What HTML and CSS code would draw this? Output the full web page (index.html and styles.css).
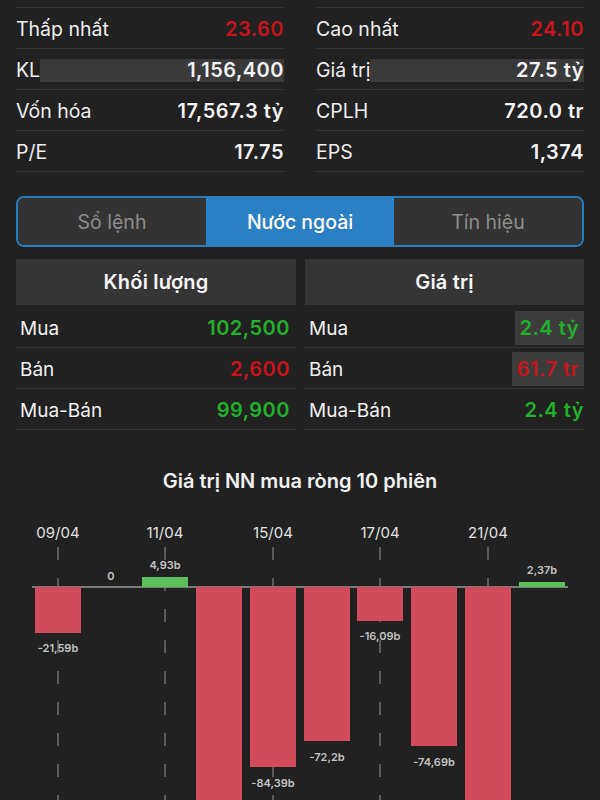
FILE: index.html
```html
<html>
<head>
	<title>Nước ngoài</title>
	<meta charset='UTF-8'>
	<link rel="stylesheet" href="styles.css">
</head>
<body>
	<div class='stats'>
		<div class='col'>
			<div class='row'><span class='lbl'>Thấp nhất</span><span class='val red'>23.60</span></div>
			<div class='row'><span class='lbl'>KL</span><span class='val bar'>1,156,400</span></div>
			<div class='row'><span class='lbl'>Vốn hóa</span><span class='val'>17,567.3 tỷ</span></div>
			<div class='row'><span class='lbl'>P/E</span><span class='val'>17.75</span></div>
		</div>
		<div class='col'>
			<div class='row'><span class='lbl'>Cao nhất</span><span class='val red'>24.10</span></div>
			<div class='row'><span class='lbl'>Giá trị</span><span class='val bar'>27.5 tỷ</span></div>
			<div class='row'><span class='lbl'>CPLH</span><span class='val'>720.0 tr</span></div>
			<div class='row'><span class='lbl'>EPS</span><span class='val'>1,374</span></div>
		</div>
	</div>

	<div class='tabs'>
		<div class='tab'>Sổ lệnh</div>
		<div class='tab active'>Nước ngoài</div>
		<div class='tab'>Tín hiệu</div>
	</div>

	<div class='foreign'>
		<div class='fcol'>
			<div class='fhead'>Khối lượng</div>
			<div class='frow'><span>Mua</span><span class='fval green'>102,500</span></div>
			<div class='frow'><span>Bán</span><span class='fval red'>2,600</span></div>
			<div class='frow'><span>Mua-Bán</span><span class='fval green'>99,900</span></div>
		</div>
		<div class='fcol'>
			<div class='fhead'>Giá trị</div>
			<div class='frow'><span>Mua</span><span class='fval green boxed'>2.4 tỷ</span></div>
			<div class='frow'><span>Bán</span><span class='fval red boxed'>61.7 tr</span></div>
			<div class='frow'><span>Mua-Bán</span><span class='fval green'>2.4 tỷ</span></div>
		</div>
	</div>

	<div class='chartTitle'>Giá trị NN mua ròng 10 phiên</div>

	<svg class='chart' width='600' height='295' viewBox='0 0 600 295'>
		<g class='dash'>
			<line x1='58' y1='42' x2='58' y2='295'/>
			<line x1='165' y1='42' x2='165' y2='295'/>
			<line x1='273' y1='42' x2='273' y2='295'/>
			<line x1='380' y1='42' x2='380' y2='295'/>
			<line x1='488' y1='42' x2='488' y2='295'/>
		</g>
		<g class='dates'>
			<text x='58' y='33'>09/04</text>
			<text x='165' y='33'>11/04</text>
			<text x='273' y='33'>15/04</text>
			<text x='380' y='33'>17/04</text>
			<text x='488' y='33'>21/04</text>
		</g>
		<line class='axis' x1='32' y1='82' x2='568' y2='82'/>
		<g class='neg'>
			<rect x='35' y='82' width='46' height='46'/>
			<rect x='196' y='82' width='46' height='230'/>
			<rect x='250' y='82' width='46' height='180'/>
			<rect x='304' y='82' width='46' height='154'/>
			<rect x='357' y='82' width='46' height='34'/>
			<rect x='411' y='82' width='46' height='159'/>
			<rect x='465' y='82' width='46' height='230'/>
		</g>
		<g class='pos'>
			<rect x='142' y='72' width='46' height='10'/>
			<rect x='519' y='77' width='46' height='5'/>
		</g>
		<g class='vals'>
			<text x='58' y='147'>-21,59b</text>
			<text x='111' y='75'>0</text>
			<text x='165' y='64'>4,93b</text>
			<text x='273' y='282'>-84,39b</text>
			<text x='327' y='256'>-72,2b</text>
			<text x='380' y='135'>-16,09b</text>
			<text x='434' y='261'>-74,69b</text>
			<text x='542' y='69'>2,37b</text>
		</g>
	</svg>
</body>
</html>
```

FILE: styles.css
```css
body {
	margin: 0;
	background: #212121;
	color: #f0f0f0;
	font-family: Inter, "Noto Sans", sans-serif;
	width: 600px;
	height: 800px;
	overflow: hidden;
}
.stats {
	display: grid;
	grid-template-columns: 1fr 1fr;
	column-gap: 32px;
	padding: 7px 16px 0 16px;
}
.col {
	border-bottom: 1px solid #353535;
}
.row {
	display: flex;
	align-items: center;
	justify-content: space-between;
	height: 41px;
	padding-top: 2px;
	box-sizing: border-box;
	border-top: 1px solid #353535;
	font-size: 19.5px;
}
.lbl {
	color: #eeeeee;
}
.val {
	font-weight: 600;
	font-size: 20px;
	letter-spacing: 0.5px;
	color: #f2f2f2;
}
.val.bar {
	flex: 1;
	text-align: right;
	background: #3a3a3a;
	line-height: 23px;
}
.red {
	color: #c8141c !important;
}
.green {
	color: #22b02c;
}
.tabs {
	display: flex;
	margin: 24px 16px 0 16px;
	height: 47px;
	border: 2px solid #2a7cba;
	border-radius: 8px;
	overflow: hidden;
}
.tab {
	flex: 1;
	display: flex;
	align-items: center;
	justify-content: center;
	background: #333333;
	color: #8c8c8c;
	font-size: 19.5px;
}
.tab.active {
	background: #2b80c3;
	color: #ffffff;
	font-weight: 500;
}
.foreign {
	display: grid;
	grid-template-columns: 280px 279px;
	column-gap: 9px;
	margin: 12px 16px 0 16px;
}
.fhead {
	height: 46px;
	display: flex;
	align-items: center;
	justify-content: center;
	background: #353535;
	font-weight: 600;
	font-size: 20px;
	letter-spacing: 0.2px;
	color: #f5f5f5;
}
.frow {
	display: flex;
	align-items: center;
	justify-content: space-between;
	height: 41px;
	box-sizing: border-box;
	padding-left: 4px;
	padding-top: 2px;
	border-bottom: 1px solid #353535;
	font-size: 19px;
}
.fhead + .frow {
	height: 43px;
	padding-top: 4px;
}
.fcol:first-child .frow {
	padding-right: 6px;
}
.fval {
	font-weight: 600;
	font-size: 20px;
	letter-spacing: 0.5px;
}
.fval.boxed {
	background: #3c3c3c;
	padding: 5px 5px;
}
.chartTitle {
	text-align: center;
	font-weight: 600;
	font-size: 20px;
	color: #f0f0f0;
	margin-top: 39px;
	height: 36px;
}
.chart {
	display: block;
}
.dash line {
	stroke: #6e6e6e;
	stroke-width: 1.5;
	stroke-dasharray: 13 18;
}
.dates text {
	fill: #e0e0e0;
	font-size: 15px;
	text-anchor: middle;
	font-family: Inter, "Noto Sans", sans-serif;
}
.axis {
	stroke: #7a7a7a;
	stroke-width: 2;
}
.neg rect {
	fill: #d24b5c;
}
.pos rect {
	fill: #5cbf5c;
}
.vals text {
	fill: #c4c4c4;
	font-size: 11px;
	font-weight: 600;
	text-anchor: middle;
	font-family: Inter, "Noto Sans", sans-serif;
}
```
